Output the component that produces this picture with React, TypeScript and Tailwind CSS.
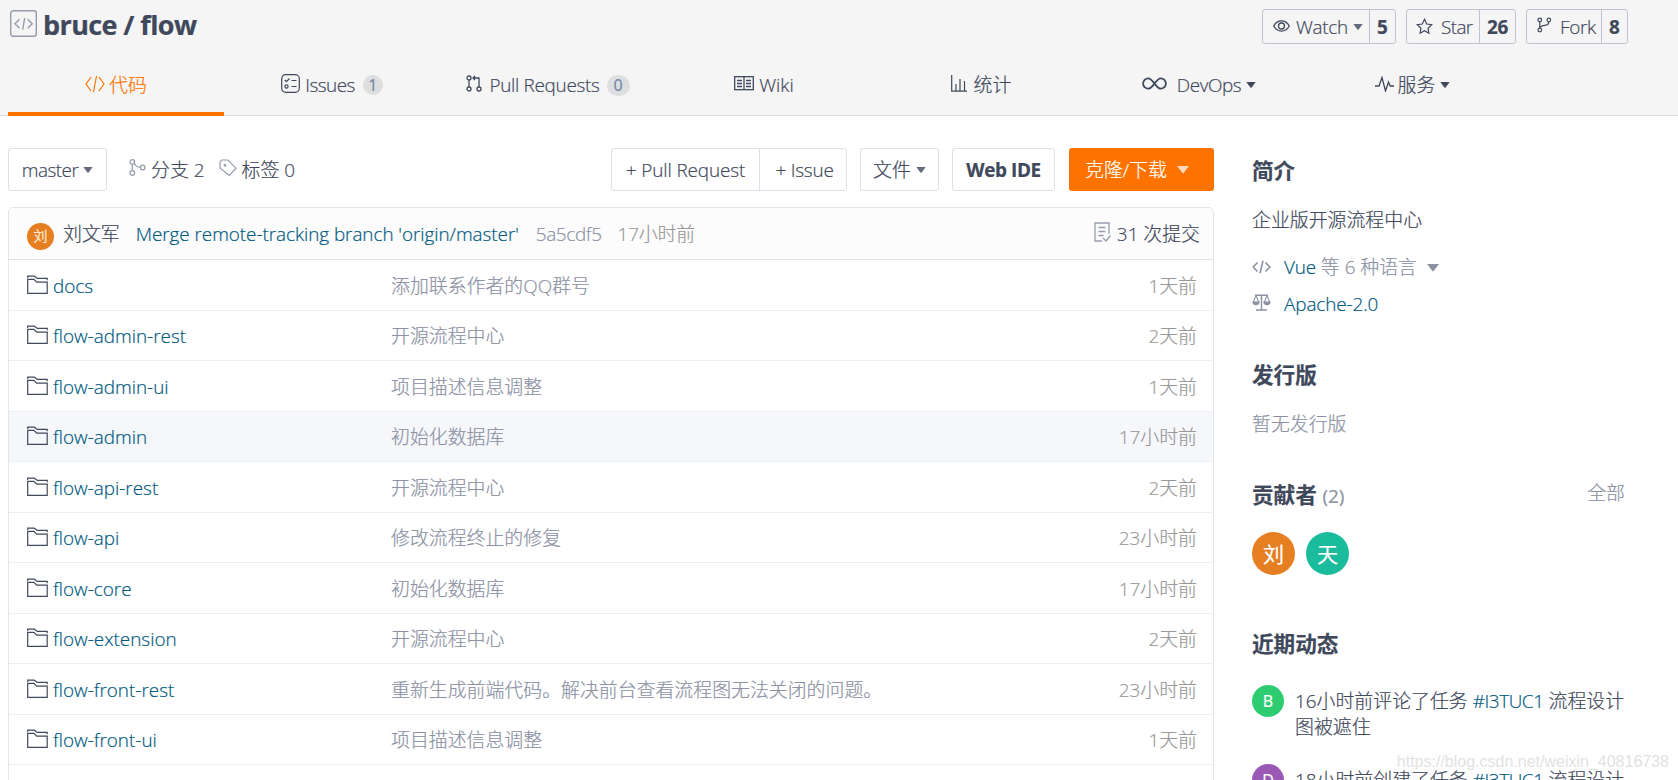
import type { ReactNode } from "react";

const files = [
  { name: "docs", message: "添加联系作者的QQ群号", time: "1天前" },
  { name: "flow-admin-rest", message: "开源流程中心", time: "2天前" },
  { name: "flow-admin-ui", message: "项目描述信息调整", time: "1天前" },
  { name: "flow-admin", message: "初始化数据库", time: "17小时前", active: true },
  { name: "flow-api-rest", message: "开源流程中心", time: "2天前" },
  { name: "flow-api", message: "修改流程终止的修复", time: "23小时前" },
  { name: "flow-core", message: "初始化数据库", time: "17小时前" },
  { name: "flow-extension", message: "开源流程中心", time: "2天前" },
  { name: "flow-front-rest", message: "重新生成前端代码。解决前台查看流程图无法关闭的问题。", time: "23小时前" },
  { name: "flow-front-ui", message: "项目描述信息调整", time: "1天前" },
];

function Icon({ w, h, className = "", sw = 1.3, children }: { w: number; h: number; className?: string; sw?: number; children: ReactNode }) {
  return (
    <svg
      width={w}
      height={h}
      viewBox={`0 0 ${w} ${h}`}
      fill="none"
      stroke="currentColor"
      strokeWidth={sw}
      className={`shrink-0 ${className}`}
    >
      {children}
    </svg>
  );
}

function Caret({ className = "" }: { className?: string }) {
  return (
    <svg width="10" height="6" viewBox="0 0 10 6" fill="currentColor" className={`shrink-0 ${className}`}>
      <path d="M0.3 0h9.4L5.8 5.2a1 1 0 0 1-1.6 0z" />
    </svg>
  );
}

function FolderIcon() {
  return (
    <Icon w={21} h={20} sw={1.2} className="text-[#40485b]">
      <path d="M0.7 2.9V1.2h6.6l3 2.2h9.9v1.8" />
      <path d="M0.7 18.3V4.4h6.2l2.8 2.7h10.5v11.2z" />
    </Icon>
  );
}

function Tab({ active, children }: { active?: boolean; children: ReactNode }) {
  return (
    <a
      className={`flex h-[60px] w-[216px] shrink-0 items-center justify-center border-b-4 pt-[2px] ${
        active ? "border-[#fe7300] text-[#fe7300]" : "border-transparent"
      }`}
    >
      {children}
    </a>
  );
}

function CountButton({
  icon,
  label,
  count,
  className,
  countClass,
}: {
  icon: ReactNode;
  label: ReactNode;
  count: number;
  className: string;
  countClass: string;
}) {
  return (
    <div className={`flex h-[35px] rounded-[3px] border border-[#c0c3cf] ${className}`}>
      <div className="flex flex-1 items-center pl-[9px]">
        {icon}
        {label}
      </div>
      <div className={`flex items-center justify-center border-l border-[#c0c3cf] font-bold ${countClass}`}>{count}</div>
    </div>
  );
}

function Header() {
  return (
    <header className="h-[116px] border-b border-[#dcdde0] bg-[#f5f5f5]">
      <div className="flex h-[56px] items-start justify-between pr-[50px] pl-[10px]">
        <div className="flex items-start">
          <Icon w={27} h={27} className="mt-[10px] text-[#969cad]" sw={1.4}>
            <rect x="0.7" y="0.7" width="25.6" height="25.6" rx="2.5" />
            <path d="M9.5 9.2 5 13.7l4.5 4.5M17.7 9.2l4.5 4.5-4.5 4.5M14.7 8l-2 11.6" />
          </Icon>
          <h1 className="mt-[6px] ml-[6px] text-[27px] leading-[37px] font-bold tracking-[-0.6px] whitespace-nowrap">bruce / flow</h1>
        </div>
        <div className="mt-[9px] flex gap-[10px]">
          <CountButton
            className="w-[134px]"
            countClass="w-[26px]"
            count={5}
            icon={
              <Icon w={17} h={12} className="mb-[2px] ml-px">
                <path d="M0.7 6C4.5-0.8 12.5-0.8 16.3 6 12.5 12.8 4.5 12.8 0.7 6z" />
                <circle cx="8.5" cy="6" r="3" />
              </Icon>
            }
            label={
              <>
                <span className="ml-[6px] tracking-[-0.3px]">Watch</span>
                <Caret className="ml-[5px] text-[#636b7d]" />
              </>
            }
          />
          <CountButton
            className="w-[110px]"
            countClass="w-[36px] tracking-[-0.2px]"
            count={26}
            icon={
              <Icon w={17} h={16} className="mb-[2px]" sw={1.2}>
                <path d="m8.5 1.3 2.2 4.7 5 .7-3.7 3.5.9 5-4.4-2.4-4.4 2.4.9-5L1.3 6.7l5-.7z" />
              </Icon>
            }
            label={<span className="ml-[8px] tracking-[-0.6px]">Star</span>}
          />
          <CountButton
            className="w-[102px]"
            countClass="w-[26px]"
            count={8}
            icon={
              <Icon w={15} h={16} className="mb-[3px] ml-px" sw={1.2}>
                <circle cx="2.8" cy="3" r="1.8" />
                <circle cx="2.8" cy="13" r="1.8" />
                <circle cx="11.8" cy="3" r="1.8" />
                <path d="M2.8 4.8v6.4M11.8 4.8c0 2.600-1.5 3.4-4 3.6-2.6.2-4.3.8-5 2.6" />
              </Icon>
            }
            label={<span className="ml-[8px] tracking-[-0.3px]">Fork</span>}
          />
        </div>
      </div>
      <nav className="flex pl-2">
        <Tab active>
          <Icon w={20} h={18} className="mr-[4px] mb-[3px]" sw={1.2}>
            <path d="M6 2 1 9l5 7M14 2l5 7-5 7M11.5 1 8.5 17" />
          </Icon>
          <span>代码</span>
        </Tab>
        <Tab>
          <Icon w={19} h={19} className="mr-[5px] mb-[4px]" sw={1.2}>
            <rect x="0.7" y="0.7" width="17.6" height="17.6" rx="4" />
            <path d="m3.800 6 1.600 1.700L8.500 4.500M10.500 6.500h5M10.500 12.500h5" />
            <circle cx="5.500" cy="12.500" r="1.600" />
          </Icon>
          <span className="tracking-[-0.5px]">Issues</span>
          <span className="ml-[8px] flex size-[20px] items-center justify-center rounded-full bg-[#dcdee0] text-[16px] font-normal text-[#7585a8]">1</span>
        </Tab>
        <Tab>
          <Icon w={16} h={17} className="mr-[7px] mb-[4px]" sw={1.3}>
            <circle cx="3" cy="3" r="2" />
            <circle cx="3" cy="14" r="2" />
            <circle cx="13" cy="14" r="2" />
            <path d="M3 5v7M13 12V3H7M9 1 7 3l2 2" />
          </Icon>
          <span className="tracking-[-0.3px]">Pull Requests</span>
          <span className="ml-[7px] flex h-[21px] w-[23px] items-center justify-center rounded-full bg-[#dcdee0] text-[16px] font-normal text-[#7585a8]">0</span>
        </Tab>
        <Tab>
          <Icon w={20} h={15} className="mr-[5px] mb-[4px]" sw={1.3}>
            <rect x="0.7" y="0.7" width="18.6" height="13" />
            <path d="M10 1v13M3 4.5h5M3 7.500h5M3 10.500h5M12 4.500h5M12 7.500h5M12 10.500h5" />
          </Icon>
          <span>Wiki</span>
        </Tab>
        <Tab>
          <Icon w={17} h={17} className="mr-[6px] mb-[3px] ml-[2px]" sw={1.2}>
            <path d="M0.7 0v16.200H16M5 9v7M9 4v12M13.500 6v10" />
          </Icon>
          <span>统计</span>
        </Tab>
        <Tab>
          <Icon w={25} h={13} className="mr-[10px] mb-[4px] ml-[6px]" sw={1.8}>
            <path d="M12.500 6.500C10 3.300 8.700 1.300 6.300 1.300a5.200 5.200 0 0 0 0 10.400c2.400 0 3.700-2 6.200-5.200s3.800-5.200 6.200-5.200a5.200 5.200 0 0 1 0 10.400c-2.400 0-3.700-2-6.200-5.200z" />
          </Icon>
          <span className="tracking-[-0.4px]">DevOps</span>
          <Caret className="ml-[5px]" />
        </Tab>
        <Tab>
          <Icon w={19} h={16} className="mr-[4px] mb-[3px] ml-px">
            <path d="M0 10h4l3-8.500L10.500 15l3-9 1.700 4H19" />
          </Icon>
          <span>服务</span>
          <Caret className="ml-[5px]" />
        </Tab>
      </nav>
    </header>
  );
}

function Toolbar() {
  const box = "flex items-center justify-center border border-[#dce1e7] whitespace-nowrap";
  return (
    <div className="flex h-[43px] items-center">
      <button className={`${box} h-full w-[99px] rounded-[3px]`}>
        <span className="tracking-[-0.5px]">master</span>
        <Caret className="ml-[5px] text-[#636b7d]" />
      </button>
      <Icon w={17} h={17} className="mb-[4px] ml-[22px] text-[#969cad]">
        <circle cx="3.3" cy="3" r="2.3" />
        <circle cx="3.3" cy="14" r="2.3" />
        <circle cx="13.7" cy="8.5" r="2.3" />
        <path d="M3.3 5.3v6.4M5.2 4.2c1.3 2.5 3 3.8 6.200 4.100" />
      </Icon>
      <span className="ml-[5px]">分支 2</span>
      <Icon w={18} h={18} className="mb-[4px] ml-[15px] text-[#969cad]" sw={1.2}>
        <path d="M1 3.500 2.500 1H9l8 8.200-6.700 7.300L1 9z" />
        <circle cx="6" cy="6.300" r="0.800" fill="currentColor" />
      </Icon>
      <span className="ml-[4px]">标签 0</span>
      <div className="ml-auto flex h-full">
        <button className={`${box} w-[149px] rounded-l-[3px] tracking-[-0.1px]`}>+ Pull Request</button>
        <button className={`${box} -ml-px w-[88px] rounded-r-[3px] pl-[3px] tracking-[-0.2px]`}>+ Issue</button>
        <button className={`${box} ml-[13px] w-[79px] rounded-[3px]`}>
          文件
          <Caret className="ml-[5px] text-[#636b7d]" />
        </button>
        <button className={`${box} ml-[13px] w-[103px] rounded-[3px] font-bold tracking-[-0.4px]`}>Web IDE</button>
        <button className="ml-[14px] flex w-[145px] items-center rounded-[3px] bg-[#fe7300] pl-[16px] text-white">
          克隆/下载
          <svg width="12" height="8" viewBox="0 0 12 8" className="ml-[10px]" fill="#ffd9bd">
            <path d="M0 0h12L6.8 6.800a1 1 0 0 1-1.600 0z" />
          </svg>
        </button>
      </div>
    </div>
  );
}

function FileList() {
  return (
    <div className="mt-4 h-[600px] rounded-t-[5px] border border-[#e3e6e9]">
      <div className="flex h-[52px] items-center rounded-t-[5px] border-b border-[#dfe2e6] bg-[#fcfcfc] pr-[13px] pl-[18px]">
        <span className="mt-[5px] flex size-[27px] items-center justify-center rounded-full bg-[#e67e22] text-[14px] font-normal text-[#ffe9d5]">刘</span>
        <span className="ml-[9px]">刘文军</span>
        <span className="ml-[16px] tracking-[-0.05px] text-[#005980]">Merge remote-tracking branch 'origin/master'</span>
        <span className="ml-[17px] tracking-[-0.35px] text-[#8c92a4]">5a5cdf5</span>
        <span className="ml-[16px] tracking-[-0.2px] text-[#999]">17小时前</span>
        <Icon w={17} h={20} className="mr-[6px] mb-[3px] ml-auto text-[#969cad]" sw={1.3}>
          <path d="M15 12V1H1v18h7M4.500 5.500h7M4.500 9.500h7M4.500 13.500h5M9 16l3 3 4.500-5.500" />
        </Icon>
        <span>31 次提交</span>
      </div>
      {files.map((file) => (
        <div
          key={file.name}
          className={`flex h-[50.500px] items-center border-b border-[#edf1f5] pr-[16px] pl-[18px] ${file.active ? "bg-[#f5f7fb]" : ""}`}
        >
          <div className="flex w-[364px] items-center">
            <FolderIcon />
            <span className="mt-[2px] ml-[5px] text-[#005980]">{file.name}</span>
          </div>
          <span className="mt-[2px] flex-1 text-[#8c92a4]">{file.message}</span>
          <span className="mt-[2px] text-[#999]">{file.time}</span>
        </div>
      ))}
    </div>
  );
}

function Avatar({ name, className }: { name: string; className: string }) {
  return <span className={`flex shrink-0 items-center justify-center rounded-full font-normal text-white ${className}`}>{name}</span>;
}

function Activity({ name, color, action, children }: { name: string; color: string; action: string; children: ReactNode }) {
  return (
    <div className="flex h-[79px] items-start">
      <Avatar name={name} className={`size-[32px] text-[16px] ${color}`} />
      <p className="mt-[3px] ml-[11px] leading-[26px] whitespace-nowrap">
        {action} <a className="tracking-[-0.4px] text-[#005980]">#I3TUC1</a> {children}
      </p>
    </div>
  );
}

function Sidebar() {
  const heading = "text-[21.6px] leading-[30px] font-bold";
  return (
    <aside className="ml-[38px] w-[373px] shrink-0">
      <h4 className={`${heading} mt-[8px]`}>简介</h4>
      <p className="mt-[21px] leading-[26px]">企业版开源流程中心</p>
      <div className="mt-[21px] flex h-[26px] items-center">
        <Icon w={19} h={14} className="text-[#8c92a4]" sw={1.6}>
          <path d="M5.500 2.500 1.200 7l4.300 4.500M13.500 2.500 17.800 7l-4.300 4.500M11 0.800 8 13.200" />
        </Icon>
        <span className="ml-[13px] tracking-[-0.2px] text-[#005980]">Vue</span>
        <span className="ml-[5px] text-[#8c92a4]">等 6 种语言</span>
        <svg width="12" height="8" viewBox="0 0 12 8" className="mt-px ml-[10px] text-[#8c92a4]" fill="currentColor">
          <path d="M0 0h12L6.800 6.800a1 1 0 0 1-1.600 0z" />
        </svg>
      </div>
      <div className="mt-[11px] flex h-[26px] items-center">
        <Icon w={19} h={17} className="mb-[3px] text-[#8c92a4]" sw={1.5}>
          <path d="M3 1.200h13M9.500 1v15M4 16h11" />
          <path d="M3.900 1.600 1.200 8.500M4.100 1.600l2.700 6.900M14.900 1.600l-2.700 6.900M15.100 1.600l2.700 6.900" strokeWidth="1.100" />
          <path d="M0.300 7.500h7.400a3.700 3.700 0 0 1-7.400 0zM11.300 7.500h7.400a3.700 3.700 0 0 1-7.400 0z" fill="currentColor" stroke="none" />
        </Icon>
        <span className="ml-[13px] tracking-[-0.1px] text-[#005980]">Apache-2.0</span>
      </div>
      <h4 className={`${heading} mt-[43px]`}>发行版</h4>
      <p className="mt-[21px] leading-[26px] text-[#8c92a4]">暂无发行版</p>
      <div className="mt-[43px] flex h-[30px] items-center justify-between">
        <h4 className={heading}>
          贡献者 <span className="text-[18.9px] font-medium text-[#8c92a4]">(2)</span>
        </h4>
        <span className="mb-[5px] text-[#8c92a4]">全部</span>
      </div>
      <div className="mt-[22px] flex gap-[11px]">
        <Avatar name="刘" className="size-[43px] bg-[#e67e22] text-[21px]" />
        <Avatar name="天" className="size-[43px] bg-[#1abc9c] text-[21px]" />
      </div>
      <h4 className={`${heading} mt-[54px]`}>近期动态</h4>
      <div className="mt-[26px]">
        <Activity name="B" color="bg-[#2ecc71]" action="16小时前评论了任务">
          流程设计
          <br />
          图被遮住
        </Activity>
        <Activity name="D" color="bg-[#9b59b6]" action="18小时前创建了任务">
          流程设计
        </Activity>
      </div>
    </aside>
  );
}

export default function App() {
  return (
    <div className="relative h-[780px] w-[1678px] overflow-hidden bg-white font-['Open_Sans','Noto_Sans_CJK_SC',sans-serif] text-[18.9px] leading-[26px] font-light text-[#40485b] [-webkit-text-stroke:0.2px]">
      <Header />
      <main className="flex items-start pt-8 pl-2">
        <div className="w-[1206px] shrink-0">
          <Toolbar />
          <FileList />
        </div>
        <Sidebar />
      </main>
      <div className="absolute right-[9px] bottom-[7px] font-['Liberation_Sans',sans-serif] text-[16px] leading-[22px] font-normal text-[#e2e2e2] [-webkit-text-stroke:0]">
        https://blog.csdn.net/weixin_40816738
      </div>
    </div>
  );
}
